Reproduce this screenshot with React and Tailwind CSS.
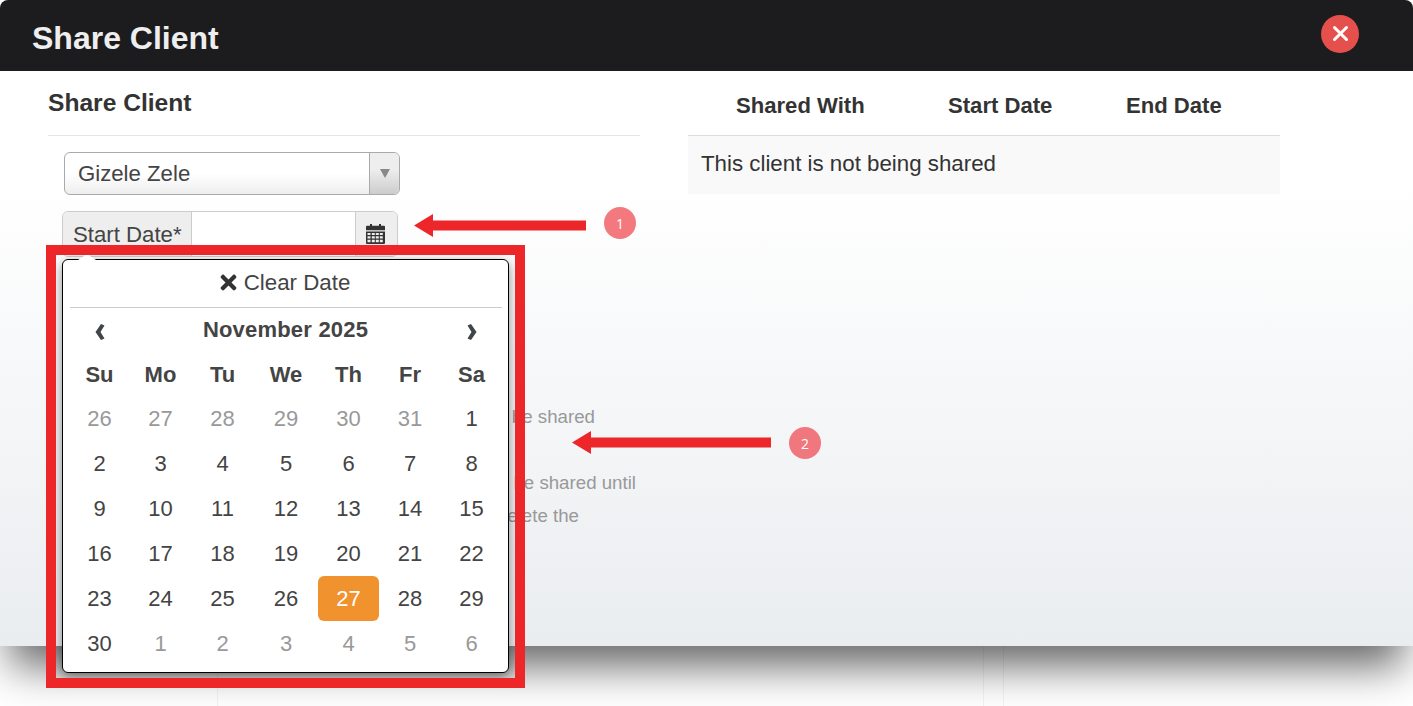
import React from "react";
import { FaTimes } from "react-icons/fa";

const weeks = [
  [["26",1],["27",1],["28",1],["29",1],["30",1],["31",1],["1",0]],
  [["2",0],["3",0],["4",0],["5",0],["6",0],["7",0],["8",0]],
  [["9",0],["10",0],["11",0],["12",0],["13",0],["14",0],["15",0]],
  [["16",0],["17",0],["18",0],["19",0],["20",0],["21",0],["22",0]],
  [["23",0],["24",0],["25",0],["26",0],["27",2],["28",0],["29",0]],
  [["30",0],["1",1],["2",1],["3",1],["4",1],["5",1],["6",1]],
];
const dow = ["Su","Mo","Tu","We","Th","Fr","Sa"];

function CalIcon() {
  return (
    <svg width="19" height="21" viewBox="0 0 19 20" preserveAspectRatio="none" fill="#333">
      <path d="M0 3.5a1 1 0 0 1 1-1h3V1h2v1.500h7V1h2v1.500h3a1 1 0 0 1 1 1V7H0z" />
      <path fillRule="evenodd" d="M0 8h19v11a1 1 0 0 1-1 1H1a1 1 0 0 1-1-1zM1.500 9.500v2h3v-2zm4.300 0v2h3v-2zm4 0v2h3v-2zm4 0v2h3v-2zm-12.300 3.200v2h3v-2zm4.300 0v2h3v-2zm4 0v2h3v-2zm4 0v2h3v-2zm-12.300 3.200v2.500h3v-2.500zm4.300 0v2.500h3v-2.500zm4 0v2.500h3v-2.500zm4 0v2.500h3v-2.500z" />
    </svg>
  );
}

function Arrow({ w }) {
  return (
    <svg width={w} height="23" viewBox={`0 0 ${w} 23`} className="block">
      <path d={`M0 11.500 L19 0 V6.500 H${w} V16.500 H19 V23 Z`} fill="#ed2629" />
    </svg>
  );
}

export default function App() {
  return (
    <div className="relative w-[1413px] h-[706px] overflow-hidden bg-white font-['Liberation_Sans',Arial,sans-serif]">
      <div className="relative z-10 rounded-t-md shadow-[0_30px_40px_-10px_rgba(0,0,0,0.6)]">
        <div className="h-[71px] bg-[#1c1c1e] rounded-t-[8px] flex items-center pl-8 pr-[54px] justify-between">
          <h1 className="text-[32px] font-bold text-[#eeeeee] leading-none pt-1">Share Client</h1>
          <button className="w-[38px] h-[38px] rounded-full bg-[#e5504c] flex items-center justify-center -mt-[4px]">
            <svg width="17" height="17" viewBox="0 0 17 17" stroke="#fff" strokeWidth="3" strokeLinecap="round">
              <path d="M2.500 2.500 14.500 14.500M14.500 2.500 2.500 14.500" />
            </svg>
          </button>
        </div>
        <div className="h-[575px] flex bg-[linear-gradient(#ffffff_20%,#eaedf0_100%)]">
          <div className="w-[592px] ml-12 shrink-0">
            <h2 className="h-[65px] border-b border-[#e5e5e5] pt-[16px] text-[24.6px] leading-[32px] font-bold text-[#333]">Share Client</h2>
            <div className="mt-4 ml-4 w-[336px] h-[43px] flex rounded-md border border-[#aaa] bg-[linear-gradient(#ffffff_50%,#eeeeee)] text-[22.2px] text-[#444]">
              <span className="flex-1 pl-[13px] leading-[41px]">Gizele Zele</span>
              <span className="w-[30px] border-l border-[#aaa] bg-[linear-gradient(#eeeeee_40%,#cccccc)] rounded-r-md flex items-center justify-center">
                <span className="w-0 h-0 border-x-[5px] border-x-transparent border-t-[9px] border-t-[#888]" />
              </span>
            </div>
            <div className="mt-4 ml-[14px] w-[336px] h-[46px] flex rounded-md border border-[#ccc] text-[22.2px] text-[#444]">
              <span className="w-[129px] bg-[#eeeeee] pl-[10px] leading-[46px] border-r border-[#ccc] rounded-l-md">Start Date*</span>
              <span className="w-[164px] bg-white" />
              <span className="flex-1 bg-[#eeeeee] border-l border-[#ccc] rounded-r-md flex items-start justify-center pt-[11px] pr-[3px] -ml-[1px]"><CalIcon /></span>
            </div>
            <div className="mt-[143px] text-[18.7px] leading-[33px] text-[#999] whitespace-nowrap">
              <p className="w-[547px] text-right">Clients can only be shared</p>
              <p>&nbsp;</p>
              <p className="w-[588px] text-right">Client will continue to be shared until</p>
              <p className="w-[531px] text-right">you choose to delete the</p>
            </div>
          </div>
          <div className="ml-12 w-[592px] text-[#333]">
            <div className="h-[64px] flex items-center pt-[6px] pl-12 text-[22.1px] font-bold whitespace-nowrap">
              <span className="w-[212px]">Shared With</span>
              <span className="w-[178px]">Start Date</span>
              <span>End Date</span>
            </div>
            <div className="h-[59px] bg-[#f9f9f9] border-t border-[#ddd] pl-[13px] text-[22.3px] leading-[56px]">This client is not being shared</div>
          </div>
        </div>
      </div>

      <div className="ml-[217px] w-[787px] h-[60px] flex justify-end border-x border-[#f3f3f3]">
        <div className="w-[20px] border-l border-[#f3f3f3]" />
      </div>

      <div className="absolute z-20 left-[62px] top-[259px] w-[447px] h-[414px] bg-white border border-black rounded-md shadow-[0_4px_12px_rgba(0,0,0,0.45)] text-[#444] text-[22px] pl-[7px] pr-[6px]">
        <div className="absolute -top-[6px] left-[15px] w-0 h-0 border-x-[9px] border-x-transparent border-b-[6px] border-b-white" />
        <div className="h-[48px] border-b border-[#ccc] flex items-center justify-center gap-[4px] pb-[2px] pr-[5px]">
          <FaTimes className="text-[#333]" size={23} />
          <span className="text-[22.3px]">Clear Date</span>
        </div>
        <div className="w-[433px] -ml-[1px]">
          <div className="grid grid-cols-[61px_61px_63px_64px_61px_62px_61px] text-center leading-[45px] -mt-[1px]">
            <svg className="justify-self-center self-center mt-[5px]" width="10" height="16" viewBox="0 0 10 16"><path d="M9.500 1.500 6 0 .5 8 6 16l3.500-1.500L5.500 8z" fill="#3f4548" /></svg>
            <span className="col-span-5 font-bold tracking-[0.2px]">November 2025</span>
            <svg className="justify-self-center self-center mt-[5px]" width="10" height="16" viewBox="0 0 10 16"><path d="M.5 1.500 4 0l5.500 8L4 16 .5 14.500 4.500 8z" fill="#3f4548" /></svg>
            {dow.map((d) => (
              <span key={d} className="font-bold">{d}</span>
            ))}
          </div>
          <div className="grid grid-cols-[61px_61px_63px_64px_61px_62px_61px] text-center leading-[45px] -mt-[1px]">
            {weeks.flat().map(([d, k], i) => (
              <span
                key={i}
                className={
                  k === 2
                    ? "bg-[#f0932f] text-white rounded-md"
                    : k === 1
                    ? "text-[#999]"
                    : "text-[#444]"
                }
              >
                {d}
              </span>
            ))}
          </div>
        </div>
      </div>

      <div className="absolute z-30 left-[46px] top-[245px] w-[479px] h-[443px] border-[10px] border-[#ed2629]" />
      <div className="absolute z-30 left-[414px] top-[214px]"><Arrow w={172} /></div>
      <div className="absolute z-30 left-[572px] top-[431px]"><Arrow w={199} /></div>
      <div className="absolute z-30 left-[604px] top-[207px] w-8 h-8 rounded-full bg-[#f4797f] text-white text-[14px] font-['Open_Sans',sans-serif] flex items-center justify-center">1</div>
      <div className="absolute z-30 left-[789px] top-[427px] w-8 h-8 rounded-full bg-[#f0777d] text-white text-[14px] font-['Open_Sans',sans-serif] flex items-center justify-center">2</div>
    </div>
  );
}
